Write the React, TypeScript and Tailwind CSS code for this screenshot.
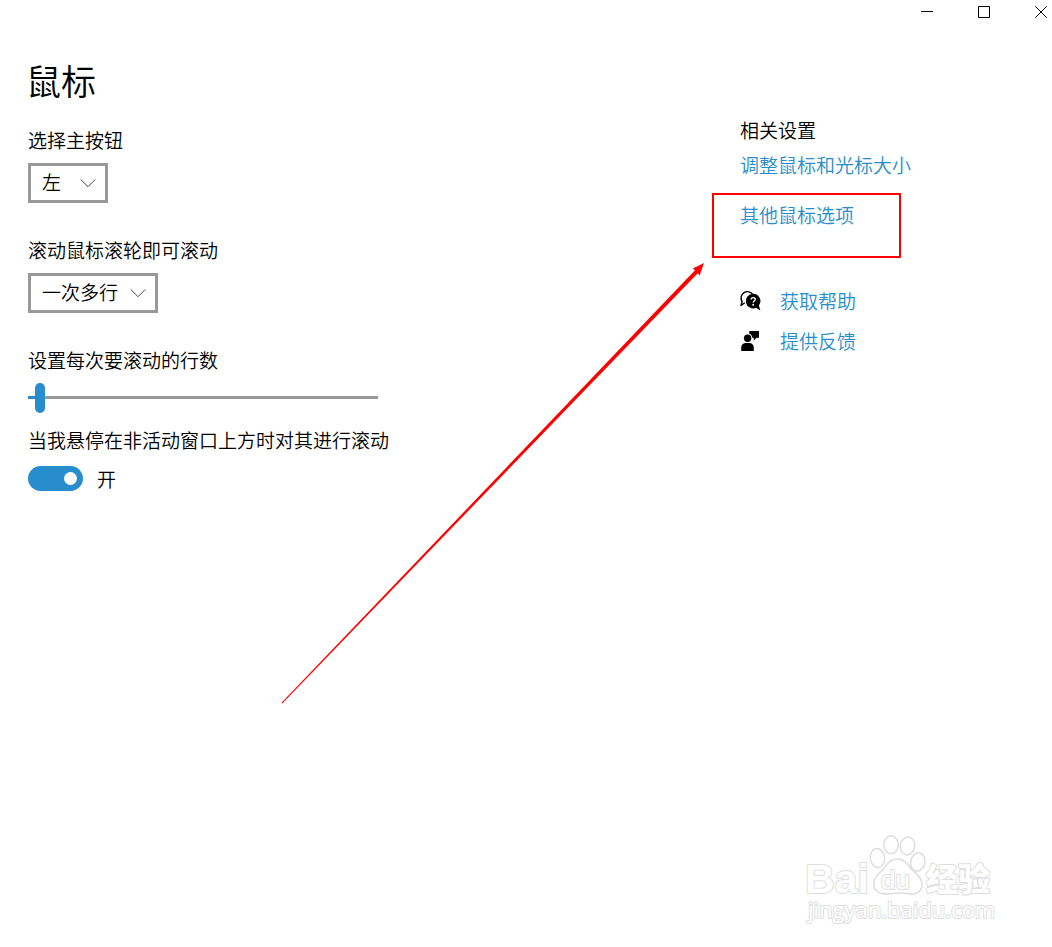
import { useState } from "react";
import type { ReactNode } from "react";

const LINK = "text-[#278dcc] hover:text-[#666666]";

function Chevron() {
  return (
    <svg
      className="pointer-events-none absolute top-1/2 right-3 -translate-y-1/2"
      width="16"
      height="10"
      viewBox="0 0 16 10"
      fill="none"
      stroke="#444"
      strokeWidth="1"
      aria-hidden="true"
    >
      <path d="M.8 1.500 8 8.700 15.200 1.500" />
    </svg>
  );
}

function SelectField({
  id,
  label,
  options,
  width,
}: {
  id: string;
  label: string;
  options: string[];
  width: string;
}) {
  return (
    <div className="flex flex-col items-start gap-[11px]">
      <label htmlFor={id}>{label}</label>
      <div className={`relative ${width}`}>
        <select
          id={id}
          className="block h-10 w-full appearance-none border-3 border-[#999] bg-white pr-7 pb-0.5 pl-[11px] leading-6 outline-none"
        >
          {options.map((option) => (
            <option key={option}>{option}</option>
          ))}
        </select>
        <Chevron />
      </div>
    </div>
  );
}

function LinesSlider() {
  const [lines, setLines] = useState(3);
  const percent = ((lines - 1) / 99) * 100;
  return (
    <div className="flex flex-col items-start gap-[11px]">
      <label htmlFor="lines">设置每次要滚动的行数</label>
      <input
        id="lines"
        type="range"
        min={1}
        max={100}
        value={lines}
        onChange={(event) => setLines(Number(event.target.value))}
        className="block h-[30px] w-full max-w-[350px] appearance-none bg-[length:100%_3px] bg-[position:0_13px] bg-no-repeat outline-none [&::-webkit-slider-thumb]:h-[30px] [&::-webkit-slider-thumb]:w-2.5 [&::-webkit-slider-thumb]:appearance-none [&::-webkit-slider-thumb]:rounded-full [&::-webkit-slider-thumb]:bg-[#278dcc]"
        style={{
          backgroundImage: `linear-gradient(to right, #278dcc ${percent}%, #999 ${percent}%)`,
        }}
      />
    </div>
  );
}

function HoverToggle() {
  const [on, setOn] = useState(true);
  return (
    <div className="flex flex-col gap-3.5">
      <label htmlFor="hover-scroll">当我悬停在非活动窗口上方时对其进行滚动</label>
      <div className="flex items-center gap-3.5">
        <input
          id="hover-scroll"
          type="checkbox"
          role="switch"
          checked={on}
          onChange={(event) => setOn(event.target.checked)}
          className="flex h-[25px] w-[55px] appearance-none items-center rounded-full bg-[#999] px-1.5 before:size-[13px] before:rounded-full before:bg-white before:content-[''] checked:justify-end checked:bg-[#278dcc]"
        />
        <span>{on ? "开" : "关"}</span>
      </div>
    </div>
  );
}

function HelpIcon() {
  return (
    <svg width="22" height="22" viewBox="0 0 22 22" aria-hidden="true">
      <path
        d="M4.800 12.700 1 15.500l1.100-4A6.300 6.300 0 1 1 12.800 4.600"
        fill="none"
        stroke="#000"
        strokeWidth="1.400"
        strokeLinejoin="round"
      />
      <path d="M13 3.800a7.300 7.300 0 1 0 3 14l4.400 2.600-1.500-4.900A7.300 7.300 0 0 0 13 3.800Z" fill="#000" />
      <path
        d="M11.100 9.500c.1-2.600 4.300-2.400 4.100 0-.1 1.400-2 1.500-2 3.100"
        fill="none"
        stroke="#fff"
        strokeWidth="1.4"
      />
      <circle cx="13.200" cy="14.800" r="0.95" fill="#fff" />
    </svg>
  );
}

function FeedbackIcon() {
  return (
    <svg width="22" height="22" viewBox="0 0 22 22" aria-hidden="true">
      <circle cx="7.600" cy="8.300" r="3.700" />
      <path d="M1.200 21v-3.200c0-3 2-4.800 4.600-4.800h3.400c2.700 0 4.600 1.800 4.600 4.800V21Z" />
      <path d="M9.300 1H19v6.800h-2.400L13.800 10.400V7.800h-1.500C12 5.400 11 4.300 9.300 3.700Z" />
    </svg>
  );
}

function SupportLink({ icon, children }: { icon: ReactNode; children: ReactNode }) {
  return (
    <a href="#" className={`flex items-center gap-[18px] ${LINK}`}>
      <span className="text-black">{icon}</span>
      {children}
    </a>
  );
}

function Arrow() {
  return (
    <svg
      className="pointer-events-none absolute top-[204px] -left-[460px]"
      width="426"
      height="442"
      viewBox="0 0 426 442"
      fill="#f00"
      aria-hidden="true"
    >
      <path d="M1.500 440.800 415 8.200 412.800 6.400 424 1 419.600 13.400 417.800 11.200 2.300 441.500Z" />
    </svg>
  );
}

function Watermark() {
  return (
    <svg
      width="190"
      height="96"
      viewBox="0 0 190 96"
      fill="#fff"
      stroke="#dedede"
      strokeWidth="2"
      strokeLinejoin="round"
      className="font-['Liberation_Sans','Noto_Sans_CJK_SC',sans-serif]"
    >
      <g strokeWidth="1.5">
        <ellipse cx="72.500" cy="23" rx="7.200" ry="9.500" transform="rotate(-8 72.500 23)" />
        <ellipse cx="86" cy="9.800" rx="7.200" ry="9" />
        <ellipse cx="102.500" cy="11" rx="7.200" ry="9" transform="rotate(10 102.500 11)" />
        <ellipse cx="112.800" cy="27" rx="7.200" ry="9.200" transform="rotate(12 112.800 27)" />
        <path d="M92.500 24c5 0 9 3 12 8 4 5 12.500 9 12.500 17 0 7-5 11-11 10-4-.6-9-1-13-1s-8 1-12 1c-8 0-13-4-12-12 1-7 7-9 11-15 3-5 7-8 12.500-8Z" />
      </g>
      <g paintOrder="stroke">
        <text x="0" y="58" fontSize="41" fontWeight="700">
          Bai
        </text>
        <text x="76" y="54" fontSize="26">
          du
        </text>
        <text x="121" y="56" fontSize="32" fontWeight="900">
          经验
        </text>
        <text x="3" y="83" fontSize="22" className="font-['Open_Sans',sans-serif] font-normal">
          jingyan.baidu.com
        </text>
      </g>
    </svg>
  );
}

export default function App() {
  return (
    <div className="flex min-h-screen flex-col overflow-hidden bg-white font-['Noto_Sans_CJK_SC',sans-serif] text-[19px] leading-6 font-[350] text-black">
      <header className="flex h-6 items-center justify-end gap-[45px] pr-[5px]">
        <button type="button" aria-label="最小化">
          <svg className="block" width="12" height="12" viewBox="0 0 12 12">
            <path d="M0 5.500h12" stroke="#000" />
          </svg>
        </button>
        <button type="button" aria-label="最大化">
          <svg className="block" width="12" height="12" viewBox="0 0 12 12">
            <path d="M.5.5h11v11H.5Z" stroke="#000" fill="none" />
          </svg>
        </button>
        <button type="button" aria-label="关闭">
          <svg className="block" width="12" height="12" viewBox="0 0 12 12">
            <path d="M.3.3l11.400 11.400M11.700.3.3 11.700" stroke="#000" />
          </svg>
        </button>
      </header>

      <div className="flex flex-1 pt-[34px]">
        <main className="flex min-w-0 flex-1 flex-col pl-[26px]">
          <h1 className="text-[35px] leading-[44px] font-[350]">鼠标</h1>
          <div className="mt-[26px] flex flex-col gap-[35px] pl-0.5">
            <SelectField id="primary" label="选择主按钮" options={["左", "右"]} width="w-20" />
            <SelectField
              id="wheel"
              label="滚动鼠标滚轮即可滚动"
              options={["一次多行", "一次一个屏幕"]}
              width="w-[130px]"
            />
            <div className="flex flex-col gap-[15px]">
              <LinesSlider />
              <HoverToggle />
            </div>
          </div>
        </main>

        <aside className="relative flex w-[312px] shrink-0 flex-col items-start pt-[60px]">
          <h2>相关设置</h2>
          <a href="#" className={`mt-[11px] ${LINK}`}>
            调整鼠标和光标大小
          </a>
          <div className="relative mt-[26px]">
            <a href="#" className={LINK}>
              其他鼠标选项
            </a>
            <span className="pointer-events-none absolute -top-[10px] -left-7 h-[65px] w-[189px] border-2 border-[#f00]" />
          </div>
          <div className="mt-[62px] flex flex-col gap-4">
            <SupportLink icon={<HelpIcon />}>获取帮助</SupportLink>
            <SupportLink icon={<FeedbackIcon />}>提供反馈</SupportLink>
          </div>
          <Arrow />
        </aside>
      </div>

      <footer className="flex justify-end pr-[57px] pb-4">
        <Watermark />
      </footer>
    </div>
  );
}
